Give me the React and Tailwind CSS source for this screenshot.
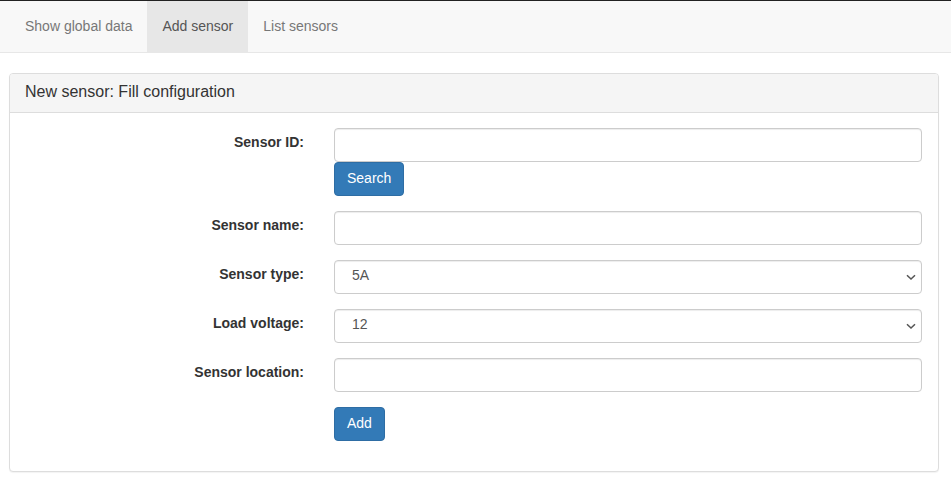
import React from "react";

const font = { fontFamily: '"Liberation Sans", Arial, Helvetica, sans-serif' };

function Chevron() {
  return (
    <svg className="pointer-events-none absolute right-[6px] top-[14px]" width="10" height="7" viewBox="0 0 10 7">
      <path d="M1 1.2 L5 5 L9 1.2" fill="none" stroke="#555" strokeWidth="1.5" />
    </svg>
  );
}

function Row({ label, children }) {
  return (
    <div className="flex mb-[15px]">
      <div className="w-[279px] shrink-0 text-right pt-[4px] text-[14px] font-bold text-[#333] leading-[20px]">
        {label}
      </div>
      <div className="ml-[30px] flex-1">{children}</div>
    </div>
  );
}

const inputCls =
  "block w-full h-[34px] rounded-[4px] border border-[#ccc] bg-white px-[12px] text-[14px] text-[#555] shadow-[inset_0_1px_1px_rgba(0,0,0,0.075)] outline-none";

function Select({ value }) {
  return (
    <div className="relative">
      <div className={inputCls + " flex items-center pl-[17px] pb-[3px]"}>{value}</div>
      <Chevron />
    </div>
  );
}

function Btn({ children }) {
  return (
    <button className="h-[34px] px-[12px] pb-[3px] rounded-[4px] bg-[#337ab7] border border-[#2e6da4] text-white text-[14px] leading-[20px]">
      {children}
    </button>
  );
}

export default function App() {
  return (
    <div style={font} className="w-[951px] h-[482px] bg-white overflow-hidden border-t border-[#222]">
      <nav className="h-[52px] bg-[#f8f8f8] border-b border-[#e7e7e7] flex pl-[10px] text-[14px] leading-[20px]">
        <div className="px-[15px] py-[15px] text-[#777]">Show global data</div>
        <div className="px-[15px] py-[15px] text-[#555] bg-[#e7e7e7]">Add sensor</div>
        <div className="px-[15px] py-[15px] text-[#777]">List sensors</div>
      </nav>
      <div className="px-[9px] pt-[20px]">
        <div className="w-[930px] border border-[#ddd] rounded-[4px] shadow-[0_1px_1px_rgba(0,0,0,0.05)] bg-white">
          <div className="h-[39px] bg-[#f5f5f5] border-b border-[#ddd] rounded-t-[3px] px-[15px] pb-[2px] flex items-center text-[16px] text-[#333]">
            New sensor: Fill configuration
          </div>
          <div className="p-[15px] pr-[16px]">
            <Row label="Sensor ID:">
              <input className={inputCls} />
              <Btn>Search</Btn>
            </Row>
            <Row label="Sensor name:">
              <input className={inputCls} />
            </Row>
            <Row label="Sensor type:">
              <Select value="5A" />
            </Row>
            <Row label="Load voltage:">
              <Select value="12" />
            </Row>
            <Row label="Sensor location:">
              <input className={inputCls} />
            </Row>
            <Row label="">
              <Btn>Add</Btn>
            </Row>
          </div>
        </div>
      </div>
    </div>
  );
}
